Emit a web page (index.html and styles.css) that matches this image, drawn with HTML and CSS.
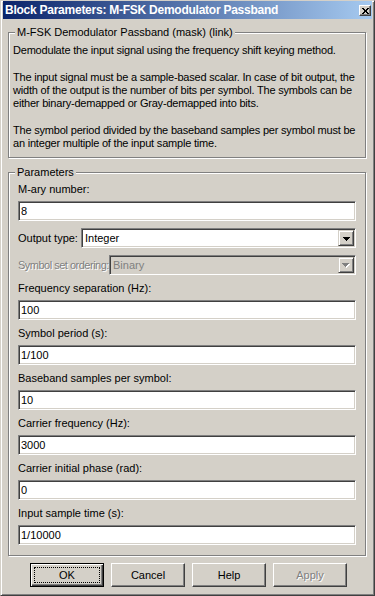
FILE: index.html
```html
<!DOCTYPE html>
<html lang="en">
<head>
    <meta charset="UTF-8">
    <meta name="viewport" content="width=device-width, initial-scale=1.0">
    <title>Block Parameters: M-FSK Demodulator Passband</title>
    <link rel="stylesheet" href="styles.css">
</head>
<body>
    <div class="window">
        <div class="titlebar">
            <span class="title">Block Parameters: M-FSK Demodulator Passband</span>
            <span class="close-btn">
                <svg width="7" height="6" viewBox="0 0 7 6">
                    <path d="M0 0h2v1H0zM5 0h2v1H5zM1 1h2v1H1zM4 1h2v1H4zM2 2h3v2H2zM1 4h2v1H1zM4 4h2v1H4zM0 5h2v1H0zM5 5h2v1H5z" fill="#000"/>
                </svg>
            </span>
        </div>

        <div class="dialog">
            <fieldset class="group desc">
                <legend>M-FSK Demodulator Passband (mask) (link)</legend>
                <p>Demodulate the input signal using the frequency shift keying method.</p>
                <p>The input signal must be a sample-based scalar. In case of bit output, the<br>
                width of the output is the number of bits per symbol. The symbols can be<br>
                either binary-demapped or Gray-demapped into bits.</p>
                <p>The symbol period divided by the baseband samples per symbol must be<br>
                an integer multiple of the input sample time.</p>
            </fieldset>

            <fieldset class="group params">
                <legend>Parameters</legend>
                <div class="fields">
                    <div class="field">
                        <label for="mary">M-ary number:</label>
                        <input class="edit" type="text" id="mary" value="8">
                    </div>
                    <div class="field inline">
                        <label>Output type:</label>
                        <div class="combo combo-output">
                            <span class="combo-text">Integer</span>
                            <span class="drop-btn">
                                <svg width="7" height="4" viewBox="0 0 7 4"><path d="M0 0h7v1H0zM1 1h5v1H1zM2 2h3v1H2zM3 3h1v1H3z" fill="#000"/></svg>
                            </span>
                        </div>
                    </div>
                    <div class="field inline disabled">
                        <label>Symbol set ordering:</label>
                        <div class="combo combo-symbol">
                            <span class="combo-text">Binary</span>
                            <span class="drop-btn">
                                <svg width="8" height="5" viewBox="0 0 8 5"><path d="M1 1h7v1H1zM2 2h5v1H2zM3 3h3v1H3zM4 4h1v1H4z" fill="#fff"/><path d="M0 0h7v1H0zM1 1h5v1H1zM2 2h3v1H2zM3 3h1v1H3z" fill="#808080"/></svg>
                            </span>
                        </div>
                    </div>
                    <div class="field">
                        <label for="fsep">Frequency separation (Hz):</label>
                        <input class="edit" type="text" id="fsep" value="100">
                    </div>
                    <div class="field">
                        <label for="tsym">Symbol period (s):</label>
                        <input class="edit" type="text" id="tsym" value="1/100">
                    </div>
                    <div class="field">
                        <label for="nsamp">Baseband samples per symbol:</label>
                        <input class="edit" type="text" id="nsamp" value="10">
                    </div>
                    <div class="field">
                        <label for="fc">Carrier frequency (Hz):</label>
                        <input class="edit" type="text" id="fc" value="3000">
                    </div>
                    <div class="field">
                        <label for="phase">Carrier initial phase (rad):</label>
                        <input class="edit" type="text" id="phase" value="0">
                    </div>
                    <div class="field">
                        <label for="ts">Input sample time (s):</label>
                        <input class="edit" type="text" id="ts" value="1/10000">
                    </div>
                </div>
            </fieldset>

            <div class="buttons">
                <button class="btn default" type="button"><span>OK</span></button>
                <button class="btn" type="button">Cancel</button>
                <button class="btn" type="button">Help</button>
                <button class="btn" type="button" disabled>Apply</button>
            </div>
        </div>
    </div>
</body>
</html>
```

FILE: styles.css
```css
* {
    box-sizing: border-box;
}

body {
    margin: 0;
    font-family: "Liberation Sans", Arial, sans-serif;
    font-size: 11px;
    color: #000;
    background-color: #d4d0c8;
}

.window {
    width: 375px;
    height: 596px;
    background-color: #d4d0c8;
    border: 1px solid;
    border-color: #d4d0c8 #404040 #404040 #d4d0c8;
    box-shadow: inset 1px 1px #fff, inset -1px -1px #808080;
    padding: 0 2px 2px 2px;
}

.titlebar {
    height: 18px;
    display: flex;
    align-items: flex-start;
    padding-left: 2px;
    color: #fff;
    background: linear-gradient(to right, #0a246a, #a6caf0);
}

.title {
    flex: 1;
    font-size: 12px;
    font-weight: bold;
    line-height: 18px;
    letter-spacing: -0.25px;
    white-space: nowrap;
}

.close-btn {
    width: 12px;
    height: 11px;
    margin: 4px 1px 0 0;
    display: flex;
    align-items: center;
    justify-content: center;
    background-color: #d4d0c8;
    border: 1px solid;
    border-color: #fff #404040 #404040 #fff;
    box-shadow: inset -1px -1px #808080;
}

.close-btn svg {
    display: block;
}

.dialog {
    padding: 7px 6px 0 5px;
}

.group {
    margin: 0;
    min-width: 0;
    padding: 5px 4px 7px 4px;
    border: 1px solid #808080;
    box-shadow: 1px 1px 0 #fff, inset 1px 1px 0 #fff;
}

.group legend {
    margin-left: 2px;
    padding: 0 2px;
    line-height: 13px;
    background-color: #d4d0c8;
}

.desc p {
    margin: 0 0 14px;
    line-height: 13px;
    letter-spacing: -0.2px;
    white-space: nowrap;
}

.desc p:last-child {
    margin-bottom: 0;
}

.params {
    margin-top: 8px;
    padding: 4px 4px 10px 4px;
}

.fields {
    padding: 0 5px;
}

.field {
    margin-bottom: 7px;
}

.field:last-child {
    margin-bottom: 0;
}

.field label {
    display: block;
    line-height: 13px;
    white-space: nowrap;
}

.field.inline {
    display: flex;
    align-items: center;
    height: 20px;
}

.edit {
    display: block;
    width: 100%;
    height: 20px;
    margin-top: 5px;
    padding: 0 2px;
    font: inherit;
    color: #000;
    background-color: #fff;
    border: 1px solid;
    border-color: #808080 #fff #fff #808080;
    box-shadow: inset 1px 1px #404040, inset -1px -1px #d4d0c8;
    outline: none;
}

.combo {
    margin-left: auto;
    height: 20px;
    display: flex;
    align-items: center;
    padding: 1px 1px 1px 3px;
    background-color: #fff;
    border: 1px solid;
    border-color: #808080 #fff #fff #808080;
    box-shadow: inset 1px 1px #404040, inset -1px -1px #d4d0c8;
}

.combo-output {
    width: 275px;
}

.combo-symbol {
    width: 247px;
}

.combo-text {
    flex: 1;
}

.drop-btn {
    width: 16px;
    height: 16px;
    display: flex;
    align-items: center;
    justify-content: center;
    padding-top: 1px;
    background-color: #d4d0c8;
    border: 1px solid;
    border-color: #d4d0c8 #404040 #404040 #d4d0c8;
    box-shadow: inset 1px 1px #fff, inset -1px -1px #808080;
}

.drop-btn svg {
    display: block;
}

.disabled label {
    color: #808080;
    letter-spacing: -0.5px;
    text-shadow: 1px 1px 0 #fff;
}

.disabled .combo {
    background-color: #d4d0c8;
}

.disabled .combo-text {
    color: #808080;
}

.buttons {
    display: flex;
    gap: 7px;
    margin-top: 7px;
    padding-left: 22px;
}

.btn {
    position: relative;
    width: 74px;
    height: 24px;
    padding: 0;
    font: inherit;
    color: #000;
    background-color: #d4d0c8;
    border: 1px solid;
    border-color: #fff #404040 #404040 #fff;
    box-shadow: inset -1px -1px #808080;
    border-radius: 0;
}

.btn.default {
    border-color: #000;
    box-shadow: inset 1px 1px #fff, inset -1px -1px #404040, inset -2px -2px #808080;
}

.btn.default::after {
    content: "";
    position: absolute;
    top: 3px;
    left: 3px;
    right: 3px;
    bottom: 3px;
    border: 1px dotted #000;
}

.btn:disabled {
    color: #808080;
    text-shadow: 1px 1px 0 #fff;
}
```
